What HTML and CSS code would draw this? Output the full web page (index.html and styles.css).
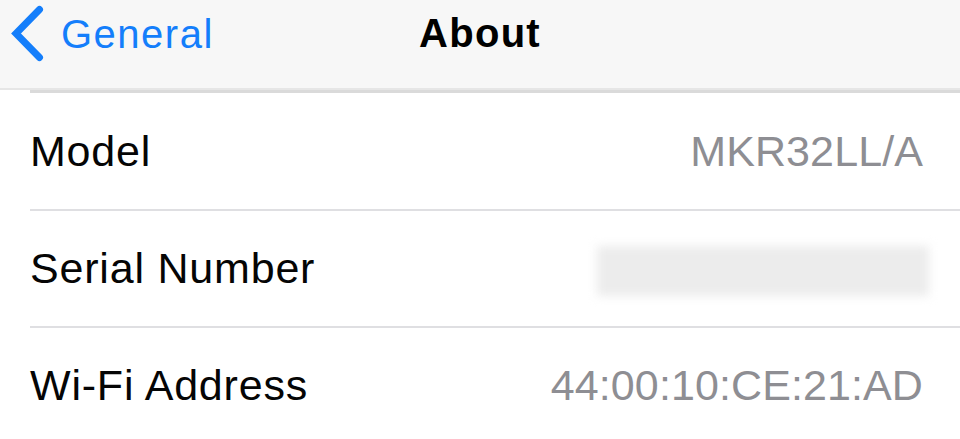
FILE: index.html
```html
<!DOCTYPE html>
<html lang="en">
<head>
<meta charset="utf-8">
<title>About</title>
<link rel="stylesheet" href="styles.css">
</head>
<body>
<div class="screen">
  <header class="navbar">
    <a class="back" href="#">
      <svg class="chevron" width="34" height="62" viewBox="0 0 34 62" aria-hidden="true">
        <polyline points="28.5,8.5 5,32.5 28.5,56.5" fill="none" stroke="#147efb" stroke-width="7" stroke-linecap="round" stroke-linejoin="miter"/>
      </svg>
      <span class="back-label">General</span>
    </a>
    <h1 class="title">About</h1>
    <div class="spacer"></div>
  </header>
  <div class="top-sep"></div>
  <ul class="list">
    <li class="row">
      <span class="label">Model</span>
      <span class="value">MKR32LL/A</span>
    </li>
    <li class="row">
      <span class="label">Serial Number</span>
      <span class="blurred" aria-label="hidden serial number"></span>
    </li>
    <li class="row">
      <span class="label">Wi-Fi Address</span>
      <span class="value">44:00:10:CE:21:AD</span>
    </li>
  </ul>
</div>
</body>
</html>
```

FILE: styles.css
```css
* {
  box-sizing: border-box;
}

html, body {
  margin: 0;
  padding: 0;
  background: #ffffff;
}

body {
  font-family: "Liberation Sans", Arial, sans-serif;
  overflow: hidden;
}

.screen {
  width: 960px;
  height: 439px;
  overflow: hidden;
  background: #ffffff;
}

.navbar {
  height: 90px;
  background: #f7f7f7;
  border-bottom: 2px solid #e6e6e6;
  display: grid;
  grid-template-columns: 1fr auto 1fr;
  align-items: start;
}

.back {
  display: flex;
  align-items: flex-start;
  text-decoration: none;
  color: #147efb;
  padding-left: 11px;
  padding-top: 1px;
}

.chevron {
  display: block;
  flex: none;
}

.back-label {
  font-size: 40px;
  line-height: 40px;
  letter-spacing: 1.5px;
  margin-left: 16px;
  margin-top: 13px;
}

.title {
  margin: 0;
  padding-top: 13px;
  font-size: 40px;
  line-height: 40px;
  font-weight: 700;
  letter-spacing: 1.3px;
  color: #000000;
}

.top-sep {
  height: 3px;
  margin-left: 30px;
  background: #dadada;
}

.list {
  list-style: none;
  margin: 0;
  padding: 1px 0 0 0;
}

.row {
  margin-left: 30px;
  padding-right: 37px;
  height: 117px;
  border-bottom: 2px solid #dfdfe2;
  display: flex;
  align-items: center;
  justify-content: space-between;
}

.label {
  font-size: 43px;
  letter-spacing: 0.8px;
  color: #050505;
}

.value {
  font-size: 43px;
  letter-spacing: 0.1px;
  color: #8e8e93;
}

.blurred {
  display: block;
  width: 332px;
  height: 50px;
  margin-top: 4px;
  margin-right: -6px;
  background: #ececec;
  filter: blur(5px);
}
```
